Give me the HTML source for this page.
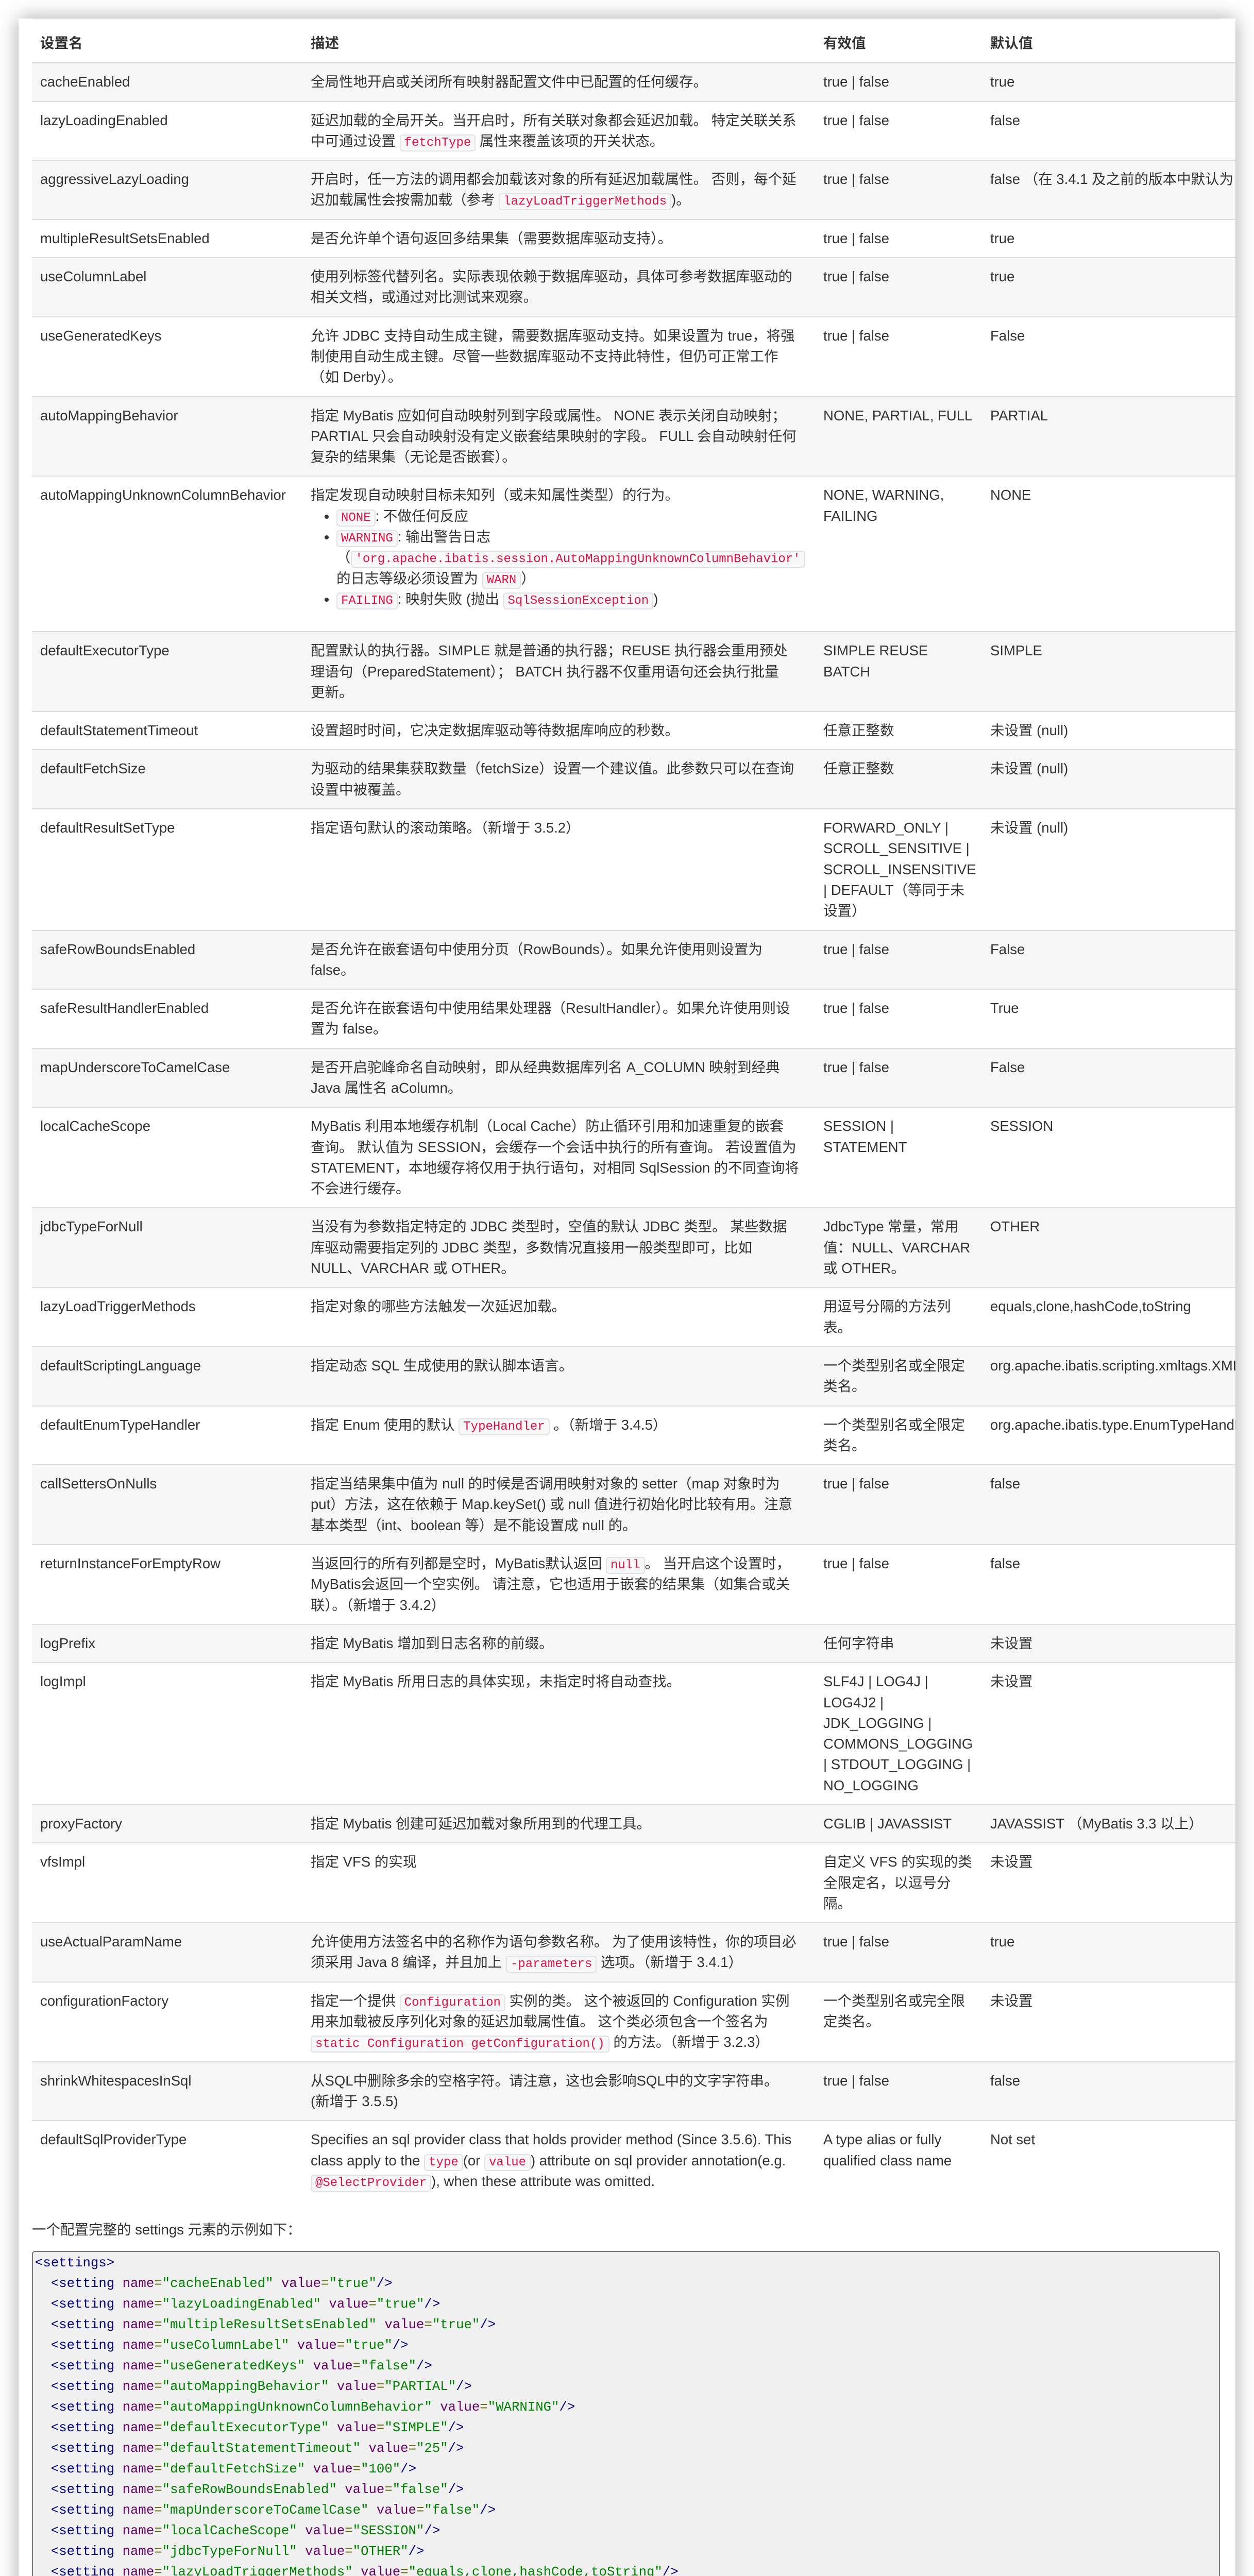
<!DOCTYPE html>
<html><head><meta charset="utf-8">
<style>
html,body{margin:0;padding:0;background:#fff;}
body{width:2434px;height:5126px;overflow:hidden;position:relative;font-family:"Liberation Sans","Noto Sans CJK SC",sans-serif;color:#333;font-size:27.5px;}
.card{position:absolute;left:36px;top:36px;width:2362px;height:5052px;background:#fff;box-shadow:0 0 36px rgba(0,0,0,0.35);overflow:hidden;}
table{position:absolute;left:26px;top:12px;border-collapse:collapse;table-layout:fixed;width:2700px;}
th,td{text-align:left;vertical-align:top;padding:16px 16px;line-height:40.3px;white-space:nowrap;}
th{font-weight:bold;border-bottom:3px solid #ddd;}
td{border-top:2px solid #ddd;}
tbody tr:nth-child(odd) td{background:#f6f6f6;}
code{font-family:"Liberation Mono",monospace;font-size:24px;line-height:1;color:#dd1144;background:#f8f8f8;border:2px solid #e1e1e8;border-radius:6px;padding:1px 7px;}
ul{margin:0 0 26px 0;padding-left:50px;}
li{line-height:40.3px;}
p.t{position:absolute;left:26px;top:4272px;margin:0;line-height:40px;}
pre{position:absolute;left:26px;top:4333px;width:2306px;margin:0;box-sizing:border-box;background:#f0f0f0;border:2px solid #777;border-radius:6px;padding:2px 4px;font-family:"Liberation Mono",monospace;font-size:25.7px;line-height:40px;color:#000080;overflow:hidden;}
.a{color:#660066}.e{color:#666600}.v{color:#008000}
</style></head><body>
<div class="card">
<table>
<colgroup><col style="width:525px"><col style="width:995px"><col style="width:324px"><col style="width:856px"></colgroup>
<thead><tr><th>设置名</th><th>描述</th><th>有效值</th><th>默认值</th></tr></thead>
<tbody>
<tr><td>cacheEnabled</td><td>全局性地开启或关闭所有映射器配置文件中已配置的任何缓存。</td><td>true | false</td><td>true</td></tr>
<tr><td>lazyLoadingEnabled</td><td>延迟加载的全局开关。当开启时，所有关联对象都会延迟加载。 特定关联关系<br>中可通过设置 <code>fetchType</code> 属性来覆盖该项的开关状态。</td><td>true | false</td><td>false</td></tr>
<tr><td>aggressiveLazyLoading</td><td>开启时，任一方法的调用都会加载该对象的所有延迟加载属性。 否则，每个延<br>迟加载属性会按需加载（参考 <code>lazyLoadTriggerMethods</code>)。</td><td>true | false</td><td>false （在 3.4.1 及之前的版本中默认为 true）</td></tr>
<tr><td>multipleResultSetsEnabled</td><td>是否允许单个语句返回多结果集（需要数据库驱动支持）。</td><td>true | false</td><td>true</td></tr>
<tr><td>useColumnLabel</td><td>使用列标签代替列名。实际表现依赖于数据库驱动，具体可参考数据库驱动的<br>相关文档，或通过对比测试来观察。</td><td>true | false</td><td>true</td></tr>
<tr><td>useGeneratedKeys</td><td>允许 JDBC 支持自动生成主键，需要数据库驱动支持。如果设置为 true，将强<br>制使用自动生成主键。尽管一些数据库驱动不支持此特性，但仍可正常工作<br>（如 Derby）。</td><td>true | false</td><td>False</td></tr>
<tr><td>autoMappingBehavior</td><td>指定 MyBatis 应如何自动映射列到字段或属性。 NONE 表示关闭自动映射；<br>PARTIAL 只会自动映射没有定义嵌套结果映射的字段。 FULL 会自动映射任何<br>复杂的结果集（无论是否嵌套）。</td><td>NONE, PARTIAL, FULL</td><td>PARTIAL</td></tr>
<tr><td>autoMappingUnknownColumnBehavior</td><td>指定发现自动映射目标未知列（或未知属性类型）的行为。<ul><li><code>NONE</code>: 不做任何反应</li><li><code>WARNING</code>: 输出警告日志<br>（<code>'org.apache.ibatis.session.AutoMappingUnknownColumnBehavior'</code><br>的日志等级必须设置为 <code>WARN</code>）</li><li><code>FAILING</code>: 映射失败 (抛出 <code>SqlSessionException</code>)</li></ul></td><td>NONE, WARNING,<br>FAILING</td><td>NONE</td></tr>
<tr><td>defaultExecutorType</td><td>配置默认的执行器。SIMPLE 就是普通的执行器；REUSE 执行器会重用预处<br>理语句（PreparedStatement）； BATCH 执行器不仅重用语句还会执行批量<br>更新。</td><td>SIMPLE REUSE<br>BATCH</td><td>SIMPLE</td></tr>
<tr><td>defaultStatementTimeout</td><td>设置超时时间，它决定数据库驱动等待数据库响应的秒数。</td><td>任意正整数</td><td>未设置 (null)</td></tr>
<tr><td>defaultFetchSize</td><td>为驱动的结果集获取数量（fetchSize）设置一个建议值。此参数只可以在查询<br>设置中被覆盖。</td><td>任意正整数</td><td>未设置 (null)</td></tr>
<tr><td>defaultResultSetType</td><td>指定语句默认的滚动策略。（新增于 3.5.2）</td><td>FORWARD_ONLY |<br>SCROLL_SENSITIVE |<br>SCROLL_INSENSITIVE<br>| DEFAULT（等同于未<br>设置）</td><td>未设置 (null)</td></tr>
<tr><td>safeRowBoundsEnabled</td><td>是否允许在嵌套语句中使用分页（RowBounds）。如果允许使用则设置为<br>false。</td><td>true | false</td><td>False</td></tr>
<tr><td>safeResultHandlerEnabled</td><td>是否允许在嵌套语句中使用结果处理器（ResultHandler）。如果允许使用则设<br>置为 false。</td><td>true | false</td><td>True</td></tr>
<tr><td>mapUnderscoreToCamelCase</td><td>是否开启驼峰命名自动映射，即从经典数据库列名 A_COLUMN 映射到经典<br>Java 属性名 aColumn。</td><td>true | false</td><td>False</td></tr>
<tr><td>localCacheScope</td><td>MyBatis 利用本地缓存机制（Local Cache）防止循环引用和加速重复的嵌套<br>查询。 默认值为 SESSION，会缓存一个会话中执行的所有查询。 若设置值为<br>STATEMENT，本地缓存将仅用于执行语句，对相同 SqlSession 的不同查询将<br>不会进行缓存。</td><td>SESSION |<br>STATEMENT</td><td>SESSION</td></tr>
<tr><td>jdbcTypeForNull</td><td>当没有为参数指定特定的 JDBC 类型时，空值的默认 JDBC 类型。 某些数据<br>库驱动需要指定列的 JDBC 类型，多数情况直接用一般类型即可，比如<br>NULL、VARCHAR 或 OTHER。</td><td>JdbcType 常量，常用<br>值：NULL、VARCHAR<br>或 OTHER。</td><td>OTHER</td></tr>
<tr><td>lazyLoadTriggerMethods</td><td>指定对象的哪些方法触发一次延迟加载。</td><td>用逗号分隔的方法列<br>表。</td><td>equals,clone,hashCode,toString</td></tr>
<tr><td>defaultScriptingLanguage</td><td>指定动态 SQL 生成使用的默认脚本语言。</td><td>一个类型别名或全限定<br>类名。</td><td>org.apache.ibatis.scripting.xmltags.XMLLanguageDriver</td></tr>
<tr><td>defaultEnumTypeHandler</td><td>指定 Enum 使用的默认 <code>TypeHandler</code> 。（新增于 3.4.5）</td><td>一个类型别名或全限定<br>类名。</td><td>org.apache.ibatis.type.EnumTypeHandler</td></tr>
<tr><td>callSettersOnNulls</td><td>指定当结果集中值为 null 的时候是否调用映射对象的 setter（map 对象时为<br>put）方法，这在依赖于 Map.keySet() 或 null 值进行初始化时比较有用。注意<br>基本类型（int、boolean 等）是不能设置成 null 的。</td><td>true | false</td><td>false</td></tr>
<tr><td>returnInstanceForEmptyRow</td><td>当返回行的所有列都是空时，MyBatis默认返回 <code>null</code>。 当开启这个设置时，<br>MyBatis会返回一个空实例。 请注意，它也适用于嵌套的结果集（如集合或关<br>联）。（新增于 3.4.2）</td><td>true | false</td><td>false</td></tr>
<tr><td>logPrefix</td><td>指定 MyBatis 增加到日志名称的前缀。</td><td>任何字符串</td><td>未设置</td></tr>
<tr><td>logImpl</td><td>指定 MyBatis 所用日志的具体实现，未指定时将自动查找。</td><td>SLF4J | LOG4J |<br>LOG4J2 |<br>JDK_LOGGING |<br>COMMONS_LOGGING<br>| STDOUT_LOGGING |<br>NO_LOGGING</td><td>未设置</td></tr>
<tr><td>proxyFactory</td><td>指定 Mybatis 创建可延迟加载对象所用到的代理工具。</td><td>CGLIB | JAVASSIST</td><td>JAVASSIST （MyBatis 3.3 以上）</td></tr>
<tr><td>vfsImpl</td><td>指定 VFS 的实现</td><td>自定义 VFS 的实现的类<br>全限定名，以逗号分<br>隔。</td><td>未设置</td></tr>
<tr><td>useActualParamName</td><td>允许使用方法签名中的名称作为语句参数名称。 为了使用该特性，你的项目必<br>须采用 Java 8 编译，并且加上 <code>-parameters</code> 选项。（新增于 3.4.1）</td><td>true | false</td><td>true</td></tr>
<tr><td>configurationFactory</td><td>指定一个提供 <code>Configuration</code> 实例的类。 这个被返回的 Configuration 实例<br>用来加载被反序列化对象的延迟加载属性值。 这个类必须包含一个签名为<br><code>static Configuration getConfiguration()</code> 的方法。（新增于 3.2.3）</td><td>一个类型别名或完全限<br>定类名。</td><td>未设置</td></tr>
<tr><td>shrinkWhitespacesInSql</td><td>从SQL中删除多余的空格字符。请注意，这也会影响SQL中的文字字符串。<br>(新增于 3.5.5)</td><td>true | false</td><td>false</td></tr>
<tr><td>defaultSqlProviderType</td><td>Specifies an sql provider class that holds provider method (Since 3.5.6). This<br>class apply to the <code>type</code>(or <code>value</code>) attribute on sql provider annotation(e.g.<br><code>@SelectProvider</code>), when these attribute was omitted.</td><td>A type alias or fully<br>qualified class name</td><td>Not set</td></tr>
</tbody></table>
<p class="t">一个配置完整的 settings 元素的示例如下：</p>
<pre>&lt;settings&gt;
  &lt;setting <span class="a">name</span><span class="e">=</span><span class="v">"cacheEnabled"</span> <span class="a">value</span><span class="e">=</span><span class="v">"true"</span>/&gt;
  &lt;setting <span class="a">name</span><span class="e">=</span><span class="v">"lazyLoadingEnabled"</span> <span class="a">value</span><span class="e">=</span><span class="v">"true"</span>/&gt;
  &lt;setting <span class="a">name</span><span class="e">=</span><span class="v">"multipleResultSetsEnabled"</span> <span class="a">value</span><span class="e">=</span><span class="v">"true"</span>/&gt;
  &lt;setting <span class="a">name</span><span class="e">=</span><span class="v">"useColumnLabel"</span> <span class="a">value</span><span class="e">=</span><span class="v">"true"</span>/&gt;
  &lt;setting <span class="a">name</span><span class="e">=</span><span class="v">"useGeneratedKeys"</span> <span class="a">value</span><span class="e">=</span><span class="v">"false"</span>/&gt;
  &lt;setting <span class="a">name</span><span class="e">=</span><span class="v">"autoMappingBehavior"</span> <span class="a">value</span><span class="e">=</span><span class="v">"PARTIAL"</span>/&gt;
  &lt;setting <span class="a">name</span><span class="e">=</span><span class="v">"autoMappingUnknownColumnBehavior"</span> <span class="a">value</span><span class="e">=</span><span class="v">"WARNING"</span>/&gt;
  &lt;setting <span class="a">name</span><span class="e">=</span><span class="v">"defaultExecutorType"</span> <span class="a">value</span><span class="e">=</span><span class="v">"SIMPLE"</span>/&gt;
  &lt;setting <span class="a">name</span><span class="e">=</span><span class="v">"defaultStatementTimeout"</span> <span class="a">value</span><span class="e">=</span><span class="v">"25"</span>/&gt;
  &lt;setting <span class="a">name</span><span class="e">=</span><span class="v">"defaultFetchSize"</span> <span class="a">value</span><span class="e">=</span><span class="v">"100"</span>/&gt;
  &lt;setting <span class="a">name</span><span class="e">=</span><span class="v">"safeRowBoundsEnabled"</span> <span class="a">value</span><span class="e">=</span><span class="v">"false"</span>/&gt;
  &lt;setting <span class="a">name</span><span class="e">=</span><span class="v">"mapUnderscoreToCamelCase"</span> <span class="a">value</span><span class="e">=</span><span class="v">"false"</span>/&gt;
  &lt;setting <span class="a">name</span><span class="e">=</span><span class="v">"localCacheScope"</span> <span class="a">value</span><span class="e">=</span><span class="v">"SESSION"</span>/&gt;
  &lt;setting <span class="a">name</span><span class="e">=</span><span class="v">"jdbcTypeForNull"</span> <span class="a">value</span><span class="e">=</span><span class="v">"OTHER"</span>/&gt;
  &lt;setting <span class="a">name</span><span class="e">=</span><span class="v">"lazyLoadTriggerMethods"</span> <span class="a">value</span><span class="e">=</span><span class="v">"equals,clone,hashCode,toString"</span>/&gt;
&lt;/settings&gt;</pre>
</div>
</body></html>
